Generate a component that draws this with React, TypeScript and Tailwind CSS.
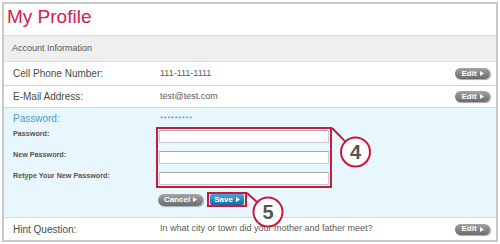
import type { ReactNode } from 'react';

function Arrow() {
  return (
    <svg width="4" height="5" viewBox="0 0 4 5" className="ml-[3px]">
      <path d="M0 0 L4 2.5 L0 5 Z" fill="#ffffff" />
    </svg>
  );
}

function EditButton() {
  return (
    <button
      type="button"
      className="flex h-[11px] w-[35px] items-center justify-center rounded-full bg-linear-to-b from-[#a3a3a3] to-[#6b6b6b] text-[8px] leading-none font-bold text-white shadow-[1px_1px_1px_rgba(0,0,0,0.35)]"
    >
      Edit
      <Arrow />
    </button>
  );
}

function Row({ label, value, className }: { label: string; value: ReactNode; className: string }) {
  return (
    <div className={`flex items-center border-b border-[#d6d6d6] pr-[6px] pl-[9px] ${className}`}>
      <div className="w-[147px] text-[10px] text-[#4a4a4a]">{label}</div>
      <div className="flex-1 text-[9px] text-[#5a5a5a]">{value}</div>
      <EditButton />
    </div>
  );
}

const fieldLabels = ['Password:', 'New Password:', 'Retype Your New Password:'];

export default function App() {
  return (
    <div className="h-[244px] w-[500px] bg-white p-[2px] font-['Liberation_Sans',Arial,sans-serif]">
      <div className="relative h-[240px] border-2 border-[#cacaca]">
        <div className="h-[31px] pt-[2px] pl-[3px] text-[19px] leading-[22px] text-[#d2204f]">My Profile</div>

        <div className="flex h-[27px] items-center border-y border-[#dcdcdc] bg-[#efefef] pl-[8px] text-[9px] text-[#555]">
          Account Information
        </div>

        <Row label="Cell Phone Number:" value="111-111-1111" className="h-[24px]" />
        <Row label="E-Mail Address:" value="test@test.com" className="h-[22px]" />

        <div className="h-[110px] border-b border-[#d6d6d6] bg-[#e8f6fd] pt-[5px]">
          <div className="flex h-[12px] items-center pl-[9px] leading-[12px]">
            <div className="w-[147px] text-[10px] text-[#4a9bd1]">Password:</div>
            <div className="text-[8px] tracking-[0.5px] text-[#4a9bd1]">*********</div>
          </div>

          <div className="mt-[2px] flex">
            <div className="flex w-[152px] flex-col gap-[8px] pt-[1px] pl-[9px]">
              {fieldLabels.map((l) => (
                <div key={l} className="flex h-[13px] items-center text-[7.2px] font-bold text-[#555]">
                  {l}
                </div>
              ))}
            </div>
            <div className="flex w-[176px] flex-col gap-[8px] border-2 border-[#c61a3e] p-[1px]">
              {fieldLabels.map((l) => (
                <input
                  key={l}
                  type="password"
                  className="h-[13px] w-full border border-[#cbcbcb] border-t-[#a8a8a8] bg-white"
                />
              ))}
            </div>
          </div>

          <div className="mt-[4px] flex items-center pl-[154px]">
            <button
              type="button"
              className="flex h-[12px] w-[45px] items-center justify-center rounded-full bg-linear-to-b from-[#a5a5a5] to-[#6c6c6c] text-[8px] leading-none font-bold text-white shadow-[1px_1px_1px_rgba(0,0,0,0.3)]"
            >
              Cancel
              <Arrow />
            </button>
            <div className="ml-[4px] flex h-[15px] w-[40px] items-center justify-center border-2 border-[#c61a3e]">
              <button
                type="button"
                className="flex h-[11px] w-[34px] items-center justify-center rounded-[2px] bg-linear-to-b from-[#4fa3d8] to-[#1d6aa0] text-[8px] leading-none font-bold text-white"
              >
                Save
                <Arrow />
              </button>
            </div>
          </div>
        </div>

        <Row
          label="Hint Question:"
          value="In what city or town did your mother and father meet?"
          className="h-[22px] border-b-0"
        />

        <svg className="pointer-events-none absolute top-0 left-0" width="492" height="236">
          <line x1="328" y1="124" x2="341.4" y2="137.6" stroke="#c61a3e" strokeWidth="2" />
          <circle cx="351.5" cy="148" r="14.5" fill="#ffffff" stroke="#c61a3e" strokeWidth="2" />
          <text
            x="351.5"
            y="155"
            textAnchor="middle"
            fontFamily="Liberation Sans, Arial, sans-serif"
            fontWeight="bold"
            fontSize="20"
            fill="#555555"
          >
            4
          </text>
          <line x1="243" y1="189" x2="253.2" y2="198.3" stroke="#c61a3e" strokeWidth="2" />
          <circle cx="264" cy="208" r="14.5" fill="#ffffff" stroke="#c61a3e" strokeWidth="2" />
          <text
            x="264"
            y="215"
            textAnchor="middle"
            fontFamily="Liberation Sans, Arial, sans-serif"
            fontWeight="bold"
            fontSize="20"
            fill="#555555"
          >
            5
          </text>
        </svg>
      </div>
    </div>
  );
}
